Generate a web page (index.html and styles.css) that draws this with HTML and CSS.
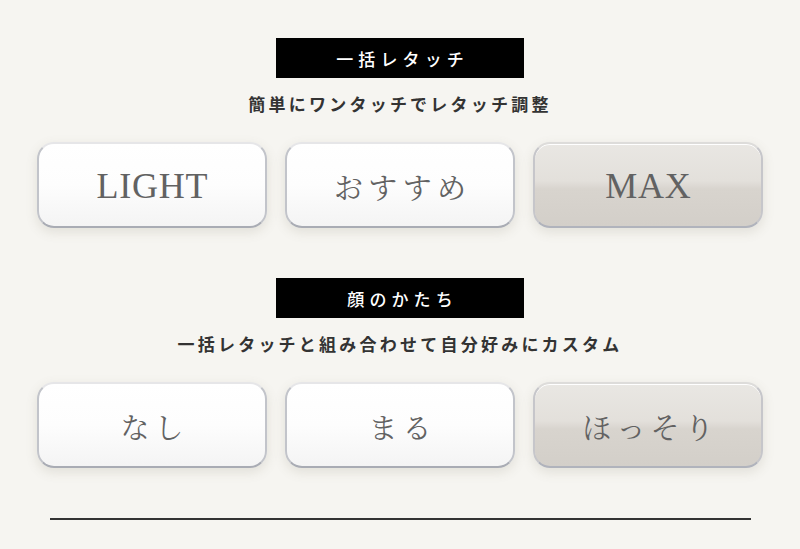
FILE: index.html
```html
<!DOCTYPE html>
<html lang="ja">
<head>
<meta charset="utf-8">
<link rel="stylesheet" href="styles.css">
</head>
<body>
<main class="page">
  <section class="group">
    <h2 class="label">一括レタッチ</h2>
    <p class="sub">簡単にワンタッチでレタッチ調整</p>
    <div class="options">
      <div class="btn latin">LIGHT</div>
      <div class="btn">おすすめ</div>
      <div class="btn active latin">MAX</div>
    </div>
  </section>
  <section class="group second">
    <h2 class="label">顔のかたち</h2>
    <p class="sub">一括レタッチと組み合わせて自分好みにカスタム</p>
    <div class="options">
      <div class="btn">なし</div>
      <div class="btn">まる</div>
      <div class="btn active">ほっそり</div>
    </div>
  </section>
  <hr class="rule">
</main>
</body>
</html>
```
FILE: styles.css
```css
html, body {
  margin: 0;
  padding: 0;
}
body {
  background: #f6f5f1;
  width: 800px;
  height: 549px;
  overflow: hidden;
  font-family: "Noto Sans CJK JP", "Noto Sans", sans-serif;
  color: #333;
}
.page {
  display: flex;
  flex-direction: column;
  align-items: center;
  padding-top: 38px;
}
.group {
  display: flex;
  flex-direction: column;
  align-items: center;
}
.second {
  margin-top: 50px;
}
.label {
  margin: 0;
  width: 248px;
  height: 40px;
  background: #000;
  color: #fff;
  font-size: 17px;
  font-weight: 500;
  letter-spacing: 0.3em;
  text-indent: 0.3em;
  display: flex;
  align-items: center;
  justify-content: center;
}
.sub {
  margin: 14px 0 0;
  font-size: 17px;
  line-height: 24px;
  font-weight: 700;
  letter-spacing: 0.19em;
  color: #333;
}
.options {
  margin-top: 26px;
  display: flex;
  gap: 18px;
}
.btn {
  box-sizing: border-box;
  width: 230px;
  height: 86px;
  border-radius: 17px;
  border: 2px solid #c2c4ca;
  border-top-color: #e6e6e8;
  border-bottom-color: #a9acb4;
  background: linear-gradient(#ffffff 0%, #fdfdfd 50%, #f4f4f4 100%);
  box-shadow: 0 4px 12px rgba(120, 110, 90, 0.16), inset 0 1px 0 #fff;
  display: flex;
  align-items: center;
  justify-content: center;
  padding-top: 2px;
  font-family: "Noto Serif CJK JP", "Noto Sans CJK JP", serif;
  font-size: 29px;
  letter-spacing: 0.18em;
  text-indent: 0.18em;
  color: #626262;
}
.btn.latin {
  font-family: "Liberation Serif", "Times New Roman", serif;
  font-size: 36px;
  letter-spacing: 0.02em;
  text-indent: 0.02em;
}
.btn.active {
  background: linear-gradient(#e9e7e3 0%, #e3e0db 45%, #d8d4ce 55%, #d3cfc9 100%);
  border-color: #c6c6ca;
  border-top-color: #dddcda;
  border-bottom-color: #b0b3bc;
}
.rule {
  margin: 50px 0 0;
  width: 701px;
  height: 0;
  border: 0;
  border-top: 2px solid #333;
}
```
